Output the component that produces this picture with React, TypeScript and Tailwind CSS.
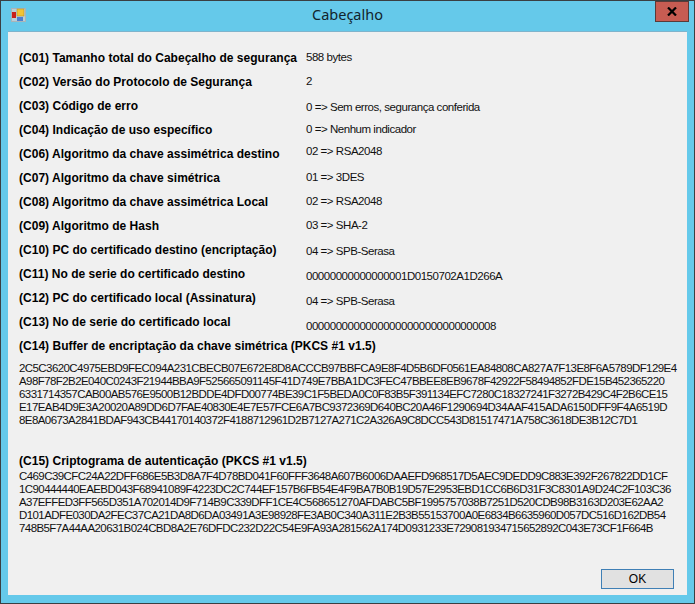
import React from 'react';

const ROWS = [
    { label: '(C01) Tamanho total do Cabeçalho de segurança', value: '588 bytes', offset: '-mt-[1px]' },
    { label: '(C02) Versão do Protocolo de Segurança', value: '2', offset: '-mt-[1px]' },
    { label: '(C03) Código de erro', value: '0 => Sem erros, segurança conferida', offset: 'mt-[1px]' },
    { label: '(C04) Indicação de uso específico', value: '0 => Nenhum indicador', offset: '-mt-[1px]' },
    { label: '(C06) Algoritmo da chave assimétrica destino', value: '02 => RSA2048', offset: '-mt-[3px]' },
    { label: '(C07) Algoritmo da chave simétrica', value: '01 => 3DES', offset: '-mt-[1px]' },
    { label: '(C08) Algoritmo da chave assimétrica Local', value: '02 => RSA2048', offset: '-mt-[1px]' },
    { label: '(C09) Algoritmo de Hash', value: '03 => SHA-2', offset: '-mt-[1px]' },
    { label: '(C10) PC do certificado destino (encriptação)', value: '04 => SPB-Serasa', offset: 'mt-[1px]' },
    { label: '(C11) No de serie do certificado destino', value: '00000000000000001D0150702A1D266A', offset: 'mt-[2px]' },
    { label: '(C12) PC do certificado local (Assinatura)', value: '04 => SPB-Serasa', offset: 'mt-[3px]' },
    { label: '(C13) No de serie do certificado local', value: '00000000000000000000000000000008', offset: 'mt-[4px]' },
];

const C14 = [
    '2C5C3620C4975EBD9FEC094A231CBECB07E672E8D8ACCCB97BBFCA9E8F4D5B6DF0561EA84808CA827A7F13E8F6A5789DF129E4',
    'A98F78F2B2E040C0243F21944BBA9F525665091145F41D749E7BBA1DC3FEC47BBEE8EB9678F42922F58494852FDE15B452365220',
    '6331714357CAB00AB576E9500B12BDDE4DFD00774BE39C1F5BEDA0C0F83B5F391134EFC7280C18327241F3272B429C4F2B6CE15',
    'E17EAB4D9E3A20020A89DD6D7FAE40830E4E7E57FCE6A7BC9372369D640BC20A46F1290694D34AAF415ADA6150DFF9F4A6519D',
    '8E8A0673A2841BDAF943CB44170140372F4188712961D2B7127A271C2A326A9C8DCC543D81517471A758C3618DE3B12C7D1',
];

const C15 = [
    'C469C39CFC24A22DFF686E5B3D8A7F4D78BD041F60FFF3648A607B6006DAAEFD968517D5AEC9DEDD9C883E392F267822DD1CF',
    '1C90444440EAEBD043F68941089F4223DC2C744EF157B6FB54E4F9BA7B0B19D57E2953EBD1CC6B6D31F3C8301A9D24C2F103C36',
    'A37EFFED3FF565D351A702014D9F714B9C339DFF1CE4C568651270AFDABC5BF1995757038B7251D520CDB98B3163D203E62AA2',
    'D101ADFE030DA2FEC37CA21DA8D6DA03491A3E98928FE3AB0C340A311E2B3B55153700A0E6834B6635960D057DC516D162DB54',
    '748B5F7A44AA20631B024CBD8A2E76DFDC232D22C54E9FA93A281562A174D0931233E729081934715652892C043E73CF1F664B',
];

const Label = ({ children }: { children: React.ReactNode }) => (
    <div className="h-[24px] text-[12px] leading-[16px] font-bold tracking-[0.02px] whitespace-nowrap text-black">{children}</div>
);

const HexBlock = ({ lines }: { lines: string[] }) => (
    <div className="text-[11.5px] leading-[13px] tracking-[-0.58px] whitespace-nowrap text-[#101010]">
        {lines.map((line) => (
            <div key={line}>{line}</div>
        ))}
    </div>
);

export default function App() {
    return (
        <div className="flex h-[604px] w-[695px] flex-col overflow-hidden border border-[#3a3f42] bg-[#65c9ea] font-['Liberation_Sans',sans-serif]">
            {/* Title bar */}
            <div className="relative flex h-[30px] shrink-0 items-center justify-center pb-[4px]">
                <svg className="absolute top-[7px] left-[10px]" width="15" height="14" viewBox="0 0 15 14">
                    <rect x="0.5" y="0.5" width="14" height="13" fill="#b9cfd8" stroke="#a9b4b8" />
                    <rect x="1" y="4" width="4" height="6" fill="#c8201c" />
                    <rect x="6" y="1" width="7" height="7" fill="#f2c434" stroke="#b58a1c" strokeWidth="0.5" />
                    <rect x="6" y="9" width="6" height="4" fill="#4c7fd0" />
                </svg>
                <span className="font-['Noto_Sans',sans-serif] text-[14.5px] leading-[20px] text-[#12242c]">Cabeçalho</span>
                <div className="absolute top-0 right-[5px] flex h-[21px] w-[34px] items-center justify-center border border-[#5a3a38] bg-[#c75c52]">
                    <svg width="10" height="9" viewBox="0 0 10 9">
                        <path d="M1 0.5 L9 8.5 M9 0.5 L1 8.5" stroke="#000" strokeWidth="2.2" />
                    </svg>
                </div>
            </div>

            {/* Client area */}
            <div className="mx-[7px] mb-[8px] flex flex-1 flex-col border-t border-[#7fb4cc] bg-[#f0f0f0] pt-[18px] pl-[11px]">
                {ROWS.map((row) => (
                    <div key={row.label} className="flex h-[24px]">
                        <div className="w-[287px] shrink-0">
                            <Label>{row.label}</Label>
                        </div>
                        <div className={`whitespace-nowrap text-[11.5px] leading-[16px] tracking-[-0.46px] text-[#101010] ${row.offset}`}>
                            {row.value}
                        </div>
                    </div>
                ))}

                <Label>(C14) Buffer de encriptação da chave simétrica (PKCS #1 v1.5)</Label>
                <HexBlock lines={C14} />

                <div className="mt-[26px]">
                    <div className="h-[17px] text-[12px] leading-[16px] font-bold tracking-[0.02px] whitespace-nowrap text-black">
                        (C15) Criptograma de autenticação (PKCS #1 v1.5)
                    </div>
                    <HexBlock lines={C15} />
                </div>

                <button className="mt-auto mr-[13px] mb-[6px] h-[20px] w-[73px] self-end border border-[#3f7fb5] bg-[#e1e1e1] text-[12px] leading-[16px] text-black">
                    OK
                </button>
            </div>
        </div>
    );
}
